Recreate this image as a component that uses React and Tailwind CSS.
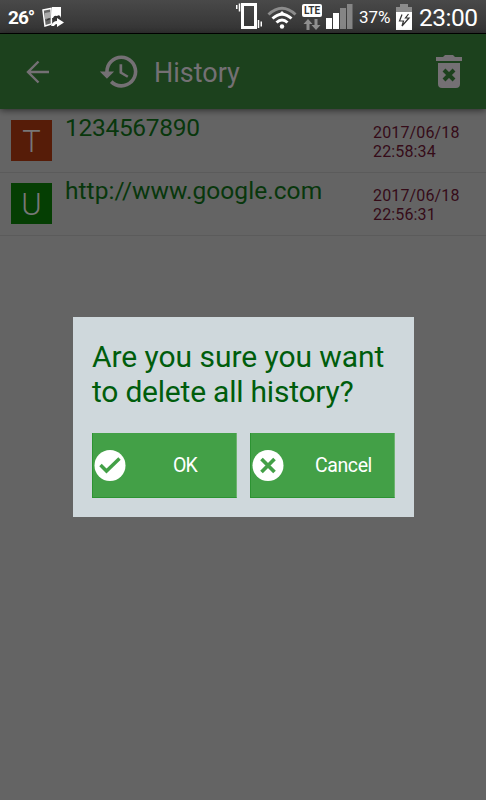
import React from 'react';

function PhotosIcon() {
  return (
    <svg className="block" width="24" height="24" viewBox="0 0 24 24">
      <path d="M1 4 9 2.500 9.500 18 3 20Z" fill="#666" stroke="#fff" strokeWidth="1.500" />
      <path d="M3 7l5-1v6l-5 1z" fill="#aaa" />
      <path d="M10 1h9v11h-9z" fill="#fff" />
      <path d="M4 15q2-4 5-2M11 12q1-3 4-2 3-2 4 2v2h-8z" fill="#333" />
      <path d="M9 20q2-5 6-5v-3l7 4.500-7 4.500v-3q-2 0-3 2z" fill="#fff" />
    </svg>
  );
}

function VibrateIcon() {
  return (
    <svg className="block" width="28" height="27" viewBox="0 0 28 27">
      <rect x="6.500" y="1.500" width="13" height="23" fill="none" stroke="#fff" strokeWidth="3" />
      <path d="M.75 2v4M3.500 0.500v8M22.500 17v8M25.250 18.500v5" stroke="#fff" strokeWidth="1.500" />
    </svg>
  );
}

function WifiIcon() {
  return (
    <svg className="block" width="30" height="24" viewBox="0 0 30 24" fill="none" strokeWidth="3">
      <path d="M1.500 8.500Q15-4 28.500 8.500" stroke="#8c8c8c" />
      <path d="M5.500 12.500Q15 4 24.500 12.500M9.500 16.500Q15 11.500 20.500 16.500" stroke="#fff" />
      <path d="M15 5l4 4h-8z" fill="#fff" />
      <circle cx="15" cy="20.500" r="2.200" fill="#fff" />
    </svg>
  );
}

function LteIcon() {
  return (
    <div className="flex w-5 flex-col items-center">
      <div className="flex h-[13px] w-5 items-center justify-center rounded-[2px] bg-white font-['Roboto',sans-serif] text-[10px] leading-none font-bold text-[#333]">LTE</div>
      <svg className="mt-[2px] block" width="18" height="11" viewBox="0 0 18 11" fill="#8f8f8f">
        <path d="M5 0l4.500 5H6.500v6h-3V5H.5zM13 11l4.500-5h-3V0h-3v6h-3z" />
      </svg>
    </div>
  );
}

function SignalIcon() {
  return (
    <svg className="block" width="27" height="26" viewBox="0 0 27 26">
      <path d="M0 14h6v11H0zM7 9h6v16H7z" fill="#fff" />
      <path d="M14 4h6v21h-6zM21 0h5.500v25H21z" fill="#858585" />
    </svg>
  );
}

function BatteryIcon() {
  return (
    <svg className="block" width="16" height="26" viewBox="0 0 16 26">
      <path d="M0 3h4V0h8v3h4v6H0z" fill="#8c8c8c" />
      <path d="M0 8h16v18H0z" fill="#fff" />
      <path d="M6 10.500L3.500 17h4l-1.500 5 7-8H9.500l3-4" fill="none" stroke="#333" strokeWidth="1.200" />
    </svg>
  );
}

function StatusBar() {
  return (
    <div className="flex h-[34px] shrink-0 border-b border-black bg-linear-to-b from-[#494949] to-[#333] text-white">
      <div className="ml-[8px] w-[34px] pt-[7px] font-['Roboto',sans-serif] text-[19px] leading-[21px] font-bold tracking-[-1px]">26°</div>
      <div className="mt-[6px] w-[194px]"><PhotosIcon /></div>
      <div className="mt-[3px] w-[31px]"><VibrateIcon /></div>
      <div className="mt-[6px] w-[35px]"><WifiIcon /></div>
      <div className="mt-1 w-6"><LteIcon /></div>
      <div className="mt-1 w-8"><SignalIcon /></div>
      <div className="w-[38px] pt-[7px] pl-px text-[17px] leading-[21px] tracking-[-0.1px]">37%</div>
      <div className="mt-1 w-[23px]"><BatteryIcon /></div>
      <div className="pt-[4px] text-[24.500px] leading-[28px] whitespace-nowrap tracking-[-0.5px]">23:00</div>
    </div>
  );
}

function Header() {
  return (
    <header className="relative z-10 flex h-[75px] shrink-0 bg-[#1c411d] text-[#747074] shadow-[0_1px_7px_rgba(0,0,0,0.6)]">
      <svg className="mt-[26px] ml-[26px] block" width="24" height="24" viewBox="0 0 24 24" fill="none" stroke="currentColor" strokeWidth="2.400">
        <path d="M23 12H3M12.500 1.500 2 12l10.500 10.500" />
      </svg>
      <svg className="mt-[16px] ml-[48px] block" width="43" height="43" viewBox="0 0 24 24" fill="currentColor">
        <path d="M13 3c-4.970 0-9 4.030-9 9H1l3.890 3.890.070.140L9 12H6c0-3.870 3.130-7 7-7s7 3.130 7 7-3.130 7-7 7c-1.930 0-3.680-.79-4.940-2.060l-1.420 1.420C8.270 19.990 10.510 21 13 21c4.970 0 9-4.030 9-9s-4.030-9-9-9zm-1 5v5l4.280 2.540.72-1.210-3.500-2.080V8H12z" />
      </svg>
      <h1 className="ml-[13px] pt-[24px] text-[27px] leading-[30px]">History</h1>
      <svg className="mt-[21px] mr-[24px] ml-auto block" width="26" height="33" viewBox="0 0 26 33" fill="currentColor">
        <path d="M0 2h7l2-2h8l2 2h7v4H0zM2 8h22v21q0 4-4 4H6q-4 0-4-4z" />
        <path d="M8 15l10 10M18 15 8 25" stroke="#1c411d" strokeWidth="4" />
      </svg>
    </header>
  );
}

function HistoryRow({ letter, tile, text, time, spacing }) {
  return (
    <div className="flex h-[63px] shrink-0 border-b border-[#5b5b5b]">
      <div className={`mt-[10px] ml-[11px] flex size-[41px] items-center justify-center pt-[2px] text-[31px] leading-none font-light text-[#777] ${tile}`}>{letter}</div>
      <div className={`ml-[13px] w-[308px] pt-[4px] text-[24.500px] leading-[28px] text-[#08370c] ${spacing}`}>{text}</div>
      <div className="pt-[13px] text-[16px] leading-[19px] tracking-[0.15px] text-[#350b18]">
        <div>2017/06/18</div>
        <div>{time}</div>
      </div>
    </div>
  );
}

function DialogButton({ label, children, labelClass }) {
  return (
    <button className="flex h-[65px] w-[145px] items-center border border-t-0 border-[#2c9332] border-r-[#6db370] bg-[#43a047] text-[19.500px] text-white">
      <svg className="block" width="33" height="33" viewBox="0 0 33 33">
        <circle cx="17" cy="16.500" r="15.500" fill="#fff" />
        {children}
      </svg>
      <span className={`pt-[2px] leading-[24px] ${labelClass}`}>{label}</span>
    </button>
  );
}

function ConfirmDialog() {
  return (
    <div className="absolute top-[317px] left-[73px] h-[200px] w-[341px] bg-[#cfd8dc] px-[19px] pt-[23px]">
      <p className="text-[30px] leading-[34.500px] whitespace-nowrap text-[#005d0c]">
        <span className="block tracking-[-0.05px]">Are you sure you want</span>
        <span className="block tracking-[-0.22px]">to delete all history?</span>
      </p>
      <div className="mt-6 flex gap-[13px]">
        <DialogButton label="OK" labelClass="ml-[47px] tracking-[-0.8px]">
          <path d="M7.500 16l6 6L26.500 9.500" fill="none" stroke="#43a047" strokeWidth="3.500" />
        </DialogButton>
        <DialogButton label="Cancel" labelClass="ml-[31px] tracking-[-0.4px]">
          <path d="M10.500 10l13 13M23.500 10l-13 13" fill="none" stroke="#43a047" strokeWidth="3.700" />
        </DialogButton>
      </div>
    </div>
  );
}

export default function App() {
  return (
    <div className="relative flex h-[800px] w-[486px] flex-col overflow-hidden bg-[#646464] font-['Roboto',sans-serif]">
      <StatusBar />
      <Header />
      <main className="flex flex-col pt-px">
        <HistoryRow letter="T" tile="bg-[#561c08]" text="1234567890" time="22:58:34" spacing="tracking-[-0.3px]" />
        <HistoryRow letter="U" tile="bg-[#053e03]" text="http://www.google.com" time="22:56:31" spacing="tracking-[0.05px]" />
      </main>
      <ConfirmDialog />
    </div>
  );
}
